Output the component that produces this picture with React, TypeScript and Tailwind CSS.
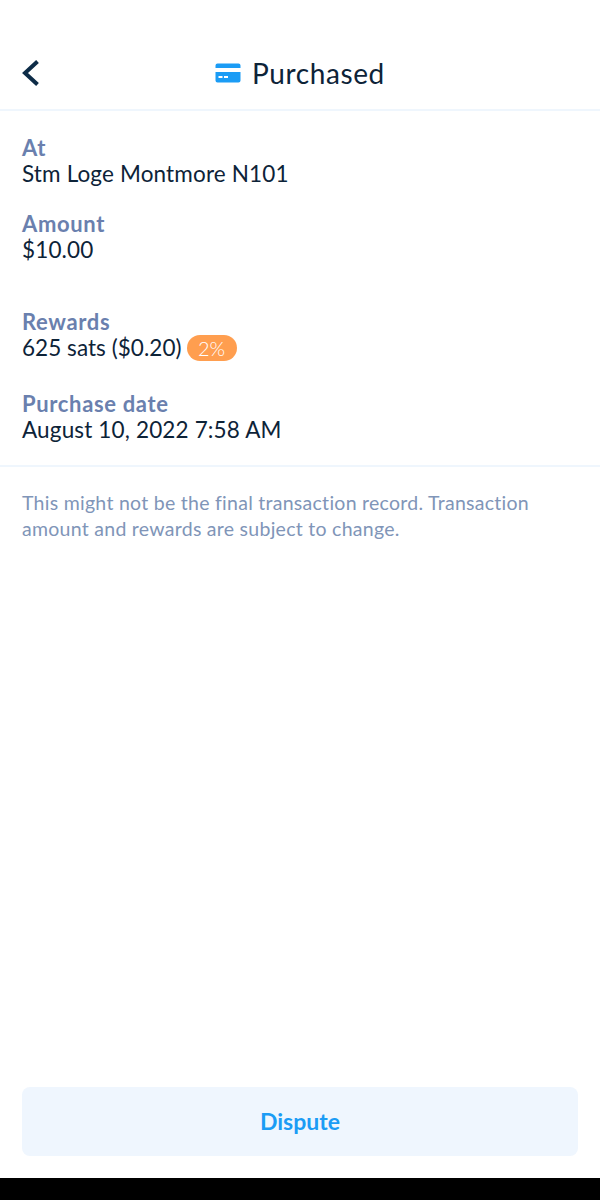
export default function App() {
  return (
    <div className="flex h-[1200px] w-[600px] flex-col bg-white font-['Lato',sans-serif] text-[#0d2338]">
      <header className="flex h-[111px] shrink-0 items-center border-b-2 border-[#eff6fd] pt-[37px]">
        <div className="relative flex w-full items-center justify-center">
          <svg className="absolute left-[21px] top-[4px]" width="20" height="28" viewBox="0 0 20 28" fill="none">
            <path d="M16.5 2.5 L4 14 L16.5 25.5" stroke="#0d2c47" strokeWidth="4" />
          </svg>
          <div className="flex items-center gap-[11px]">
            <svg width="26" height="20" viewBox="0 0 26 20">
              <path d="M2.5 0.5 H23.5 A2 2 0 0 1 25.5 2.5 V5 H0.5 V2.5 A2 2 0 0 1 2.5 0.5 Z" fill="#1b9cf5" />
              <path fillRule="evenodd" d="M0.5 9 H25.5 V17.5 A2 2 0 0 1 23.5 19.5 H2.5 A2 2 0 0 1 0.5 17.5 Z M3.5 13 V15 H7.5 V13 Z M9 13 V15 H13 V13 Z" fill="#1b9cf5" />
            </svg>
            <span className="text-[28px] leading-[36px] tracking-[0.6px]">Purchased</span>
          </div>
        </div>
      </header>
      <main className="flex flex-col px-[22px] pt-[24px]">
        <Field label="At" value="Stm Loge Montmore N101" />
        <Field className="mt-[24px]" label="Amount" value="$10.00" />
        <div className="mt-[46px]">
          <p className="text-[22px] font-bold leading-[26px] tracking-[0.65px] text-[#6a80ae]">Rewards</p>
          <div className="flex items-center text-[22.5px] leading-[26px] tracking-[0.05px]">
            <span>625 sats ($0.20)</span>
            <span className="ml-[5px] flex h-[26px] w-[50px] items-center justify-center rounded-full bg-[#ff9e4f] text-[20px] font-light text-white">2%</span>
          </div>
        </div>
        <Field className="mt-[30px]" label="Purchase date" value="August 10, 2022 7:58 AM" />
      </main>
      <div className="mt-[22px] h-[2px] bg-[#eff6fd]" />
      <p className="px-[22px] pt-[23px] text-[19.5px] leading-[26px] tracking-[0.27px] text-[#8095b8]">
        This might not be the final transaction record. Transaction amount and rewards are subject to change.
      </p>
      <div className="mt-auto px-[22px] pb-[22px]">
        <button className="flex h-[69px] w-full items-center justify-center rounded-[8px] bg-[#eff6fe] text-[23px] font-bold text-[#1b9cf5]">
          Dispute
        </button>
      </div>
      <div className="h-[22px] shrink-0 bg-black" />
    </div>
  );
}

function Field({ label, value, className = "" }: { label: string; value: string; className?: string }) {
  return (
    <div className={className}>
      <p className="text-[22px] font-bold leading-[26px] tracking-[0.65px] text-[#6a80ae]">{label}</p>
      <p className="text-[22.5px] leading-[26px] tracking-[0.15px]">{value}</p>
    </div>
  );
}
